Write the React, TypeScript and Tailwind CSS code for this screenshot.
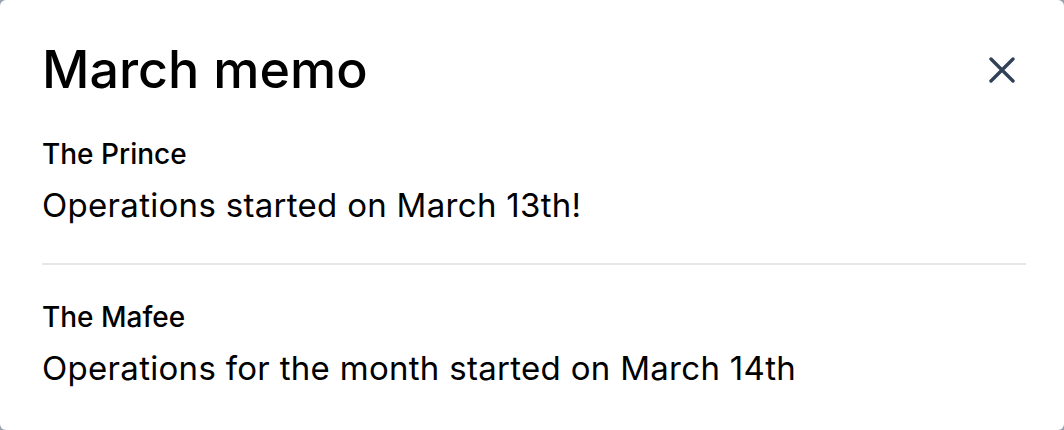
import React from 'react';

interface MemoItem {
  id: number;
  name: string;
  message: string;
}

const memos: MemoItem[] = [
  { id: 1, name: 'The Prince', message: 'Operations started on March 13th!' },
  { id: 2, name: 'The Mafee', message: 'Operations for the month started on March 14th' },
];

const CloseIcon: React.FC = () => (
  <svg width="26" height="26" viewBox="0 0 26 26" fill="none" stroke="currentColor" strokeWidth="3.4" strokeLinecap="round">
    <path d="M2 2L24 24M24 2L2 24" />
  </svg>
);

const App: React.FC = () => {
  return (
    <div className="w-[1064px] h-[430px] bg-gray-400">
      <div
        className="w-full h-full bg-white rounded-[6px] pl-[42px] pr-[38px] pt-[44px] text-black"
        style={{ fontFamily: 'Inter, "Noto Sans", sans-serif' }}
      >
        <div className="flex items-center justify-between">
          <h2 className="text-[52px] leading-[52px] font-medium">March memo</h2>
          <button className="w-12 h-12 flex items-center justify-center text-slate-700">
            <CloseIcon />
          </button>
        </div>

        <div className="mt-[41px]">
          {memos.map((memo, idx) => (
            <div key={memo.id} className={idx > 0 ? 'border-t-2 border-gray-200 pt-[35px]' : 'pb-[38px]'}>
              <p className="text-[28px] leading-[34px] font-medium">{memo.name}</p>
              <p className="mt-[14px] text-[33px] leading-[40px] tracking-[0.3px]">{memo.message}</p>
            </div>
          ))}
        </div>
      </div>
    </div>
  );
};

export default App;
